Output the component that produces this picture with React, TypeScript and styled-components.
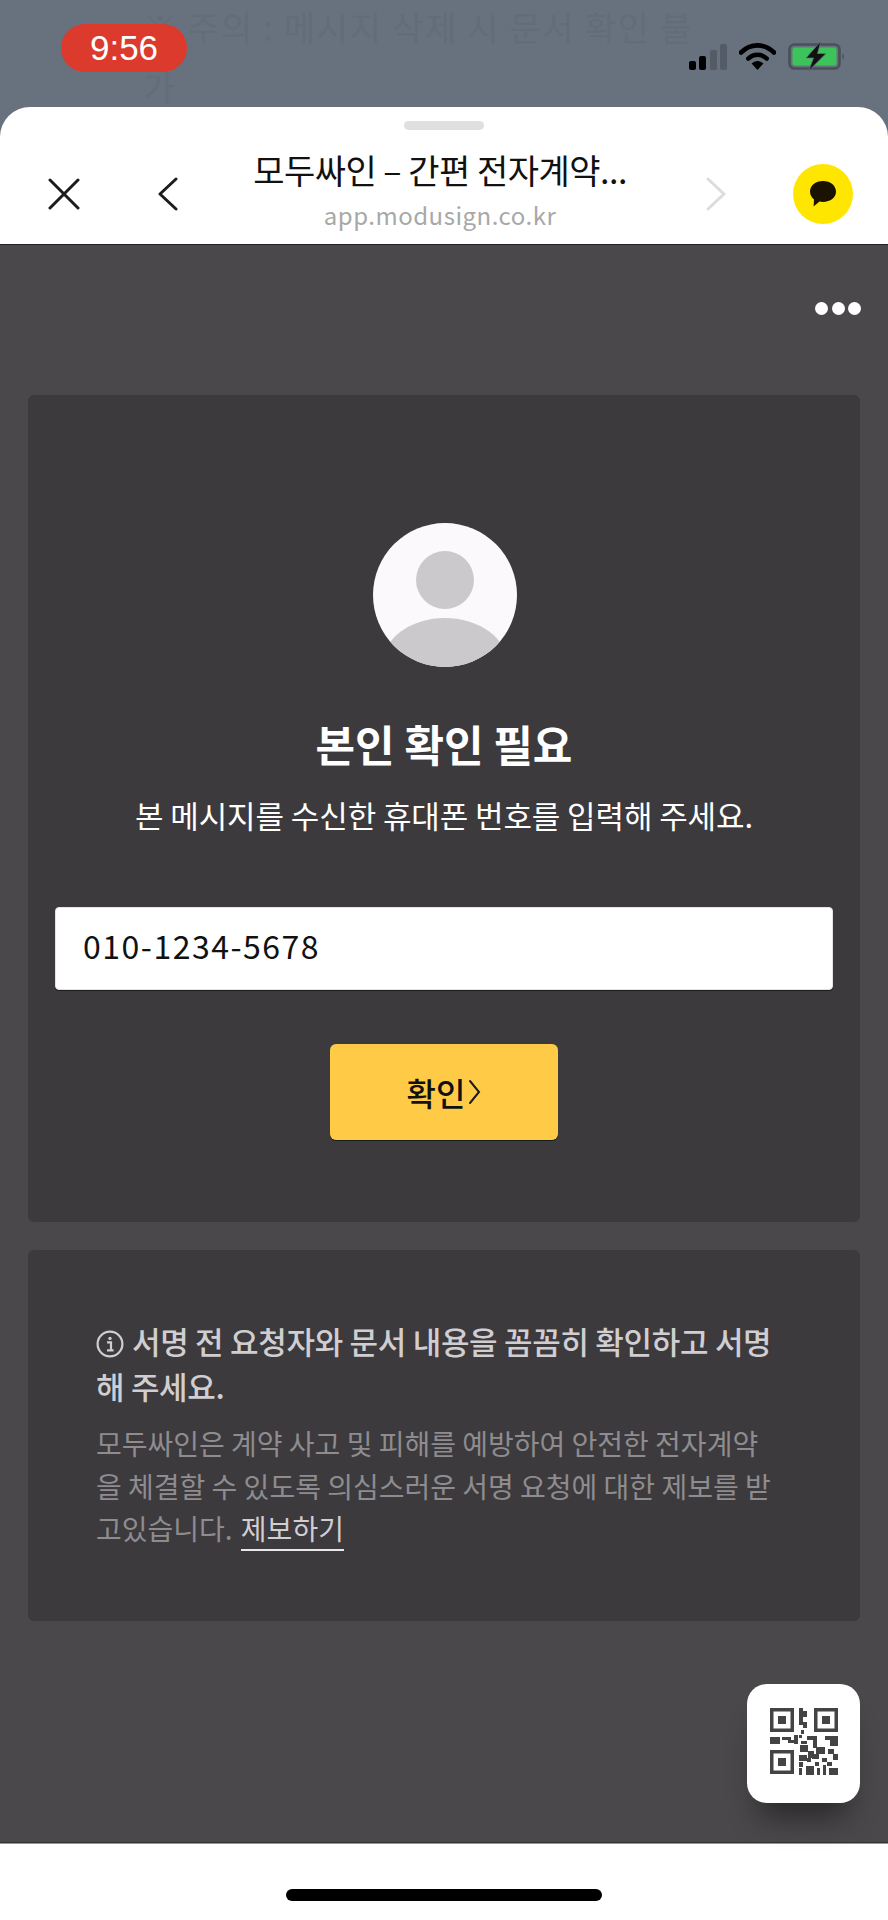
import styled, { createGlobalStyle } from 'styled-components';

const FONT = `"Noto Sans CJK KR", "Noto Sans", sans-serif`;

const GlobalStyle = createGlobalStyle`
    html, body {
        margin: 0;
        padding: 0;
        background: #fff;
    }
    * {
        box-sizing: border-box;
    }
`;

const QR_CELLS = [
    [29, 0, 4, 17], [33, 3, 4, 6], [33, 14, 4, 6],
    [0, 29, 10, 7], [12, 29, 9, 3], [18, 32, 6, 3], [24, 27, 4, 9],
    [31, 22, 3, 4], [29, 27, 3, 3], [37, 28, 10, 4], [43, 32, 4, 8], [55, 28, 13, 4], [60, 32, 8, 6],
    [31, 33, 6, 3], [30, 37, 8, 7], [38, 43, 6, 7], [29, 47, 8, 6], [46, 39, 9, 7], [42, 46, 7, 5], [58, 41, 6, 5], [63, 46, 5, 6],
    [29, 54, 4, 5], [37, 50, 4, 4], [45, 54, 4, 4], [52, 50, 5, 4], [57, 54, 5, 4],
    [29, 60, 3, 7], [36, 58, 8, 9], [47, 60, 3, 7], [53, 57, 3, 10], [59, 60, 9, 7],
];

export default function App() {
    return (
        <Screen>
            <GlobalStyle />
            <StatusArea>
                <BehindText>
                    ※ 주의 : 메시지 삭제 시 문서 확인 불<br />가
                </BehindText>
                <TimePill>9:56</TimePill>
                <StatusIcons>
                    <SignalBars>
                        <Bar $h={9} />
                        <Bar $h={14} />
                        <Bar $h={20} $dim />
                        <Bar $h={26} $dim />
                    </SignalBars>
                    <svg width="37" height="27" viewBox="0 0 37 27">
                        <path d="M2 9.5C11.5 0 25.5 0 35 9.5" fill="none" stroke="#000" strokeWidth="4.6" strokeLinecap="round" />
                        <path d="M9.2 15.6C14.8 10.4 22.2 10.4 27.8 15.6" fill="none" stroke="#000" strokeWidth="4.4" strokeLinecap="round" />
                        <path d="M12.6 20.6C16 17.2 21 17.2 24.4 20.6L18.5 27Z" fill="#000" />
                    </svg>
                    <svg width="58" height="30" viewBox="0 0 58 30">
                        <rect x="1.5" y="3.5" width="50" height="24" rx="5" fill="none" stroke="#4a5058" strokeWidth="2.6" />
                        <rect x="4.5" y="6.5" width="44" height="18" rx="2.5" fill="#3cc45a" />
                        <path d="M54.5 12.5C56.5 13.5 56.5 17.5 54.5 18.5Z" fill="#4a5058" />
                        <path d="M33 0L18 17H25.5L20.5 30L38 12.5H29.5Z" fill="#111" stroke="#67727e" strokeWidth="0.8" />
                    </svg>
                </StatusIcons>
            </StatusArea>

            <Sheet>
                <SheetHeader>
                    <Handle />
                    <NavRow>
                        <CloseSlot>
                            <svg width="32" height="32" viewBox="0 0 32 32">
                                <path d="M2 2L30 30M30 2L2 30" stroke="#1c1c1c" strokeWidth="3" strokeLinecap="round" />
                            </svg>
                        </CloseSlot>
                        <ArrowSlot>
                            <svg width="20" height="34" viewBox="0 0 20 34">
                                <path d="M18 2L2 17L18 32" fill="none" stroke="#1c1c1c" strokeWidth="3" strokeLinecap="round" strokeLinejoin="round" />
                            </svg>
                        </ArrowSlot>
                        <TitleBlock>
                            <PageTitle>모두싸인 – 간편 전자계약...</PageTitle>
                            <PageUrl>app.modusign.co.kr</PageUrl>
                        </TitleBlock>
                        <ArrowSlot>
                            <svg width="20" height="34" viewBox="0 0 20 34">
                                <path d="M2 2L18 17L2 32" fill="none" stroke="#dcdcdc" strokeWidth="3" strokeLinecap="round" strokeLinejoin="round" />
                            </svg>
                        </ArrowSlot>
                        <KakaoBadge>
                            <svg width="28" height="28" viewBox="0 0 28 28">
                                <path d="M14 1C21.5 1 27 5.6 27 11.6C27 17.6 21.5 22 14 22C12.8 22 11.6 21.9 10.5 21.6L4.6 26.6L5 19.4C2.4 17.4 1 14.7 1 11.6C1 5.6 6.5 1 14 1Z" fill="#1b1200" />
                            </svg>
                        </KakaoBadge>
                    </NavRow>
                </SheetHeader>

                <Page>
                    <MoreRow>
                        <Dot />
                        <Dot />
                        <Dot />
                    </MoreRow>

                    <VerifyCard>
                        <Avatar>
                            <AvatarHead />
                            <AvatarBody />
                        </Avatar>
                        <VerifyTitle>본인 확인 필요</VerifyTitle>
                        <VerifyDesc>본 메시지를 수신한 휴대폰 번호를 입력해 주세요.</VerifyDesc>
                        <PhoneField>010-1234-5678</PhoneField>
                        <ConfirmButton>
                            확인
                            <svg width="13" height="26" viewBox="0 0 13 26">
                                <path d="M2 2L11 13L2 24" fill="none" stroke="#1c1c1c" strokeWidth="2" strokeLinecap="round" />
                            </svg>
                        </ConfirmButton>
                    </VerifyCard>

                    <NoticeCard>
                        <NoticeTitle>
                            <InfoIcon viewBox="0 0 28 28">
                                <circle cx="14" cy="14" r="12.4" fill="none" stroke="#d0ced1" strokeWidth="2.2" />
                                <circle cx="14" cy="8.4" r="1.7" fill="#d0ced1" />
                                <path d="M11 12.4H15V20M11 20.4H17.6" fill="none" stroke="#d0ced1" strokeWidth="2.2" />
                            </InfoIcon>
                            서명 전 요청자와 문서 내용을 꼼꼼히 확인하고 서명
                            <br />해 주세요.
                        </NoticeTitle>
                        <NoticeBody>
                            모두싸인은 계약 사고 및 피해를 예방하여 안전한 전자계약
                            <br />을 체결할 수 있도록 의심스러운 서명 요청에 대한 제보를 받
                            <br />고있습니다. <ReportLink>제보하기</ReportLink>
                        </NoticeBody>
                    </NoticeCard>

                    <QrButton>
                        <svg width="68" height="68" viewBox="0 0 68 68">
                            <path
                                fillRule="evenodd"
                                fill="#444"
                                d="M0 0H24V24H0ZM3.5 3.5V20.5H20.5V3.5ZM8 8H16V16H8ZM44 0H68V24H44ZM47.5 3.5V20.5H64.5V3.5ZM52 8H60V16H52ZM0 42H24V66H0ZM3.5 45.5V62.5H20.5V45.5ZM8 50H16V58H8Z"
                            />
                            {QR_CELLS.map(([x, y, w, h], index) => (
                                <rect key={index} x={x} y={y} width={w} height={h} fill="#444" />
                            ))}
                        </svg>
                    </QrButton>
                </Page>

                <HomeBar>
                    <HomeIndicator />
                </HomeBar>
            </Sheet>
        </Screen>
    );
}

const Screen = styled.div`
    width: 888px;
    height: 1920px;
    display: flex;
    flex-direction: column;
    overflow: hidden;
    background: #67727e;
    font-family: ${FONT};
`;

const StatusArea = styled.div`
    position: relative;
    flex: 0 0 107px;
    display: flex;
    justify-content: space-between;
    padding: 24px 42px 0 61px;
`;

const BehindText = styled.div`
    position: absolute;
    left: 143px;
    top: -3px;
    font-size: 34px;
    line-height: 60px;
    letter-spacing: 1.7px;
    color: #626d79;
    white-space: nowrap;
`;

const TimePill = styled.div`
    position: relative;
    width: 126px;
    height: 48px;
    border-radius: 24px;
    background: #dc3a2d;
    color: #fff;
    display: flex;
    align-items: center;
    justify-content: center;
    font-family: 'Liberation Sans', sans-serif;
    font-size: 35px;
`;

const StatusIcons = styled.div`
    position: relative;
    height: 30px;
    margin-top: 17px;
    display: flex;
    align-items: center;
    gap: 12px;
`;

const SignalBars = styled.div`
    display: flex;
    align-items: flex-end;
    gap: 3.5px;
    height: 27px;
`;

const Bar = styled.div<{ $h: number; $dim?: boolean }>`
    width: 7px;
    height: ${(p) => p.$h}px;
    border-radius: 2px;
    background: ${(p) => (p.$dim ? '#535c66' : '#000')};
`;

const Sheet = styled.div`
    flex: 1;
    min-height: 0;
    display: flex;
    flex-direction: column;
    background: #fff;
    border-radius: 30px 30px 0 0;
    overflow: hidden;
`;

const SheetHeader = styled.header`
    flex: 0 0 137px;
    display: flex;
    flex-direction: column;
    align-items: center;
    border-bottom: 1px solid #222;
    padding-top: 14px;
`;

const Handle = styled.div`
    width: 80px;
    height: 9px;
    border-radius: 5px;
    background: #e0e0e3;
`;

const NavRow = styled.div`
    width: 100%;
    height: 114px;
    display: flex;
    align-items: center;
    padding: 0 35px 0 48px;
`;

const CloseSlot = styled.div`
    width: 32px;
    height: 32px;
    margin-top: 13px;
    margin-right: 78px;
`;

const ArrowSlot = styled.div`
    width: 20px;
    height: 34px;
    margin-top: 13px;
`;

const TitleBlock = styled.div`
    flex: 1;
    display: flex;
    flex-direction: column;
    align-items: center;
    padding-right: 4px;
    margin-top: 5px;
`;

const PageTitle = styled.div`
    font-size: 34px;
    line-height: 44px;
    letter-spacing: -0.5px;
    color: #111;
    white-space: nowrap;
`;

const PageUrl = styled.div`
    margin-top: 7px;
    font-size: 24px;
    line-height: 32px;
    letter-spacing: 0.5px;
    color: #a8a8a8;
`;

const KakaoBadge = styled.div`
    width: 60px;
    height: 60px;
    margin-left: 67px;
    margin-top: 13px;
    border-radius: 50%;
    background: #ffe600;
    display: flex;
    align-items: center;
    justify-content: center;
`;

const Page = styled.main`
    position: relative;
    flex: 1;
    min-height: 0;
    display: flex;
    flex-direction: column;
    padding: 0 28px;
    background: #4a484b;
`;

const MoreRow = styled.div`
    height: 150px;
    padding-top: 57px;
    margin-right: -1px;
    display: flex;
    justify-content: flex-end;
    gap: 3.5px;
`;

const Dot = styled.span`
    width: 13px;
    height: 13px;
    border-radius: 50%;
    background: #fff;
`;

const VerifyCard = styled.section`
    height: 827px;
    display: flex;
    flex-direction: column;
    align-items: center;
    padding: 128px 27px 0;
    background: #3c3a3d;
    border-radius: 6px;
`;

const Avatar = styled.div`
    position: relative;
    width: 144px;
    height: 144px;
    margin-left: 1px;
    border-radius: 50%;
    background: #fbf9fc;
    overflow: hidden;
    flex-shrink: 0;
`;

const AvatarHead = styled.div`
    position: absolute;
    left: 43px;
    top: 28px;
    width: 58px;
    height: 58px;
    border-radius: 50%;
    background: #cbc9cc;
`;

const AvatarBody = styled.div`
    position: absolute;
    left: 10px;
    top: 95px;
    width: 124px;
    height: 90px;
    border-radius: 50%;
    background: #cbc9cc;
`;

const VerifyTitle = styled.h1`
    margin: 46px 0 0;
    font-size: 43px;
    line-height: 60px;
    font-weight: 700;
    color: #fff;
`;

const VerifyDesc = styled.p`
    margin: 22px 0 0;
    font-size: 31px;
    line-height: 40px;
    letter-spacing: -0.1px;
    color: #fff;
    white-space: nowrap;
`;

const PhoneField = styled.div`
    width: 100%;
    height: 83px;
    margin-top: 72px;
    padding: 0 27px 7px;
    display: flex;
    align-items: center;
    background: #fff;
    border: 1px solid #e4e3e6;
    border-radius: 4px;
    box-shadow: 0 1px 0 #1c1c1c;
    font-size: 32px;
    letter-spacing: 1.5px;
    color: #111;
`;

const ConfirmButton = styled.div`
    width: 228px;
    height: 96px;
    margin-top: 54px;
    display: flex;
    align-items: center;
    justify-content: center;
    gap: 3px;
    background: #ffcb47;
    border-radius: 6px;
    box-shadow: 0 1px 0 #1c1c1c;
    font-size: 32px;
    font-weight: 500;
    color: #111;
`;

const NoticeCard = styled.section`
    height: 371px;
    margin-top: 28px;
    padding: 68px 40px 0 68px;
    background: #3c3a3d;
    border-radius: 6px;
`;

const NoticeTitle = styled.h2`
    margin: 0;
    font-size: 31px;
    line-height: 45px;
    letter-spacing: -0.3px;
    font-weight: 500;
    color: #d0ced1;
    white-space: nowrap;
`;

const InfoIcon = styled.svg`
    width: 28px;
    height: 28px;
    margin-right: 8px;
    vertical-align: -4px;
`;

const NoticeBody = styled.p`
    margin: 14px 0 0;
    font-size: 28px;
    line-height: 42.5px;
    color: #8e8c8f;
    white-space: nowrap;
`;

const ReportLink = styled.a`
    margin-left: 2px;
    color: #d0ced1;
    border-bottom: 2px solid #e8e8e8;
    padding-bottom: 1px;
`;

const QrButton = styled.div`
    position: absolute;
    left: 747px;
    top: 1439px;
    width: 113px;
    height: 119px;
    padding-bottom: 3px;
    display: flex;
    align-items: center;
    justify-content: center;
    background: #fff;
    border-radius: 20px;
    box-shadow: 0 26px 30px -12px rgba(0, 0, 0, 0.45);
`;

const HomeBar = styled.div`
    flex: 0 0 78px;
    display: flex;
    justify-content: center;
    padding-top: 46px;
    background: #fff;
    border-top: 1px solid #333;
    box-shadow: inset 0 1px 0 #999;
`;

const HomeIndicator = styled.div`
    width: 316px;
    height: 12px;
    border-radius: 6px;
    background: #000;
`;
